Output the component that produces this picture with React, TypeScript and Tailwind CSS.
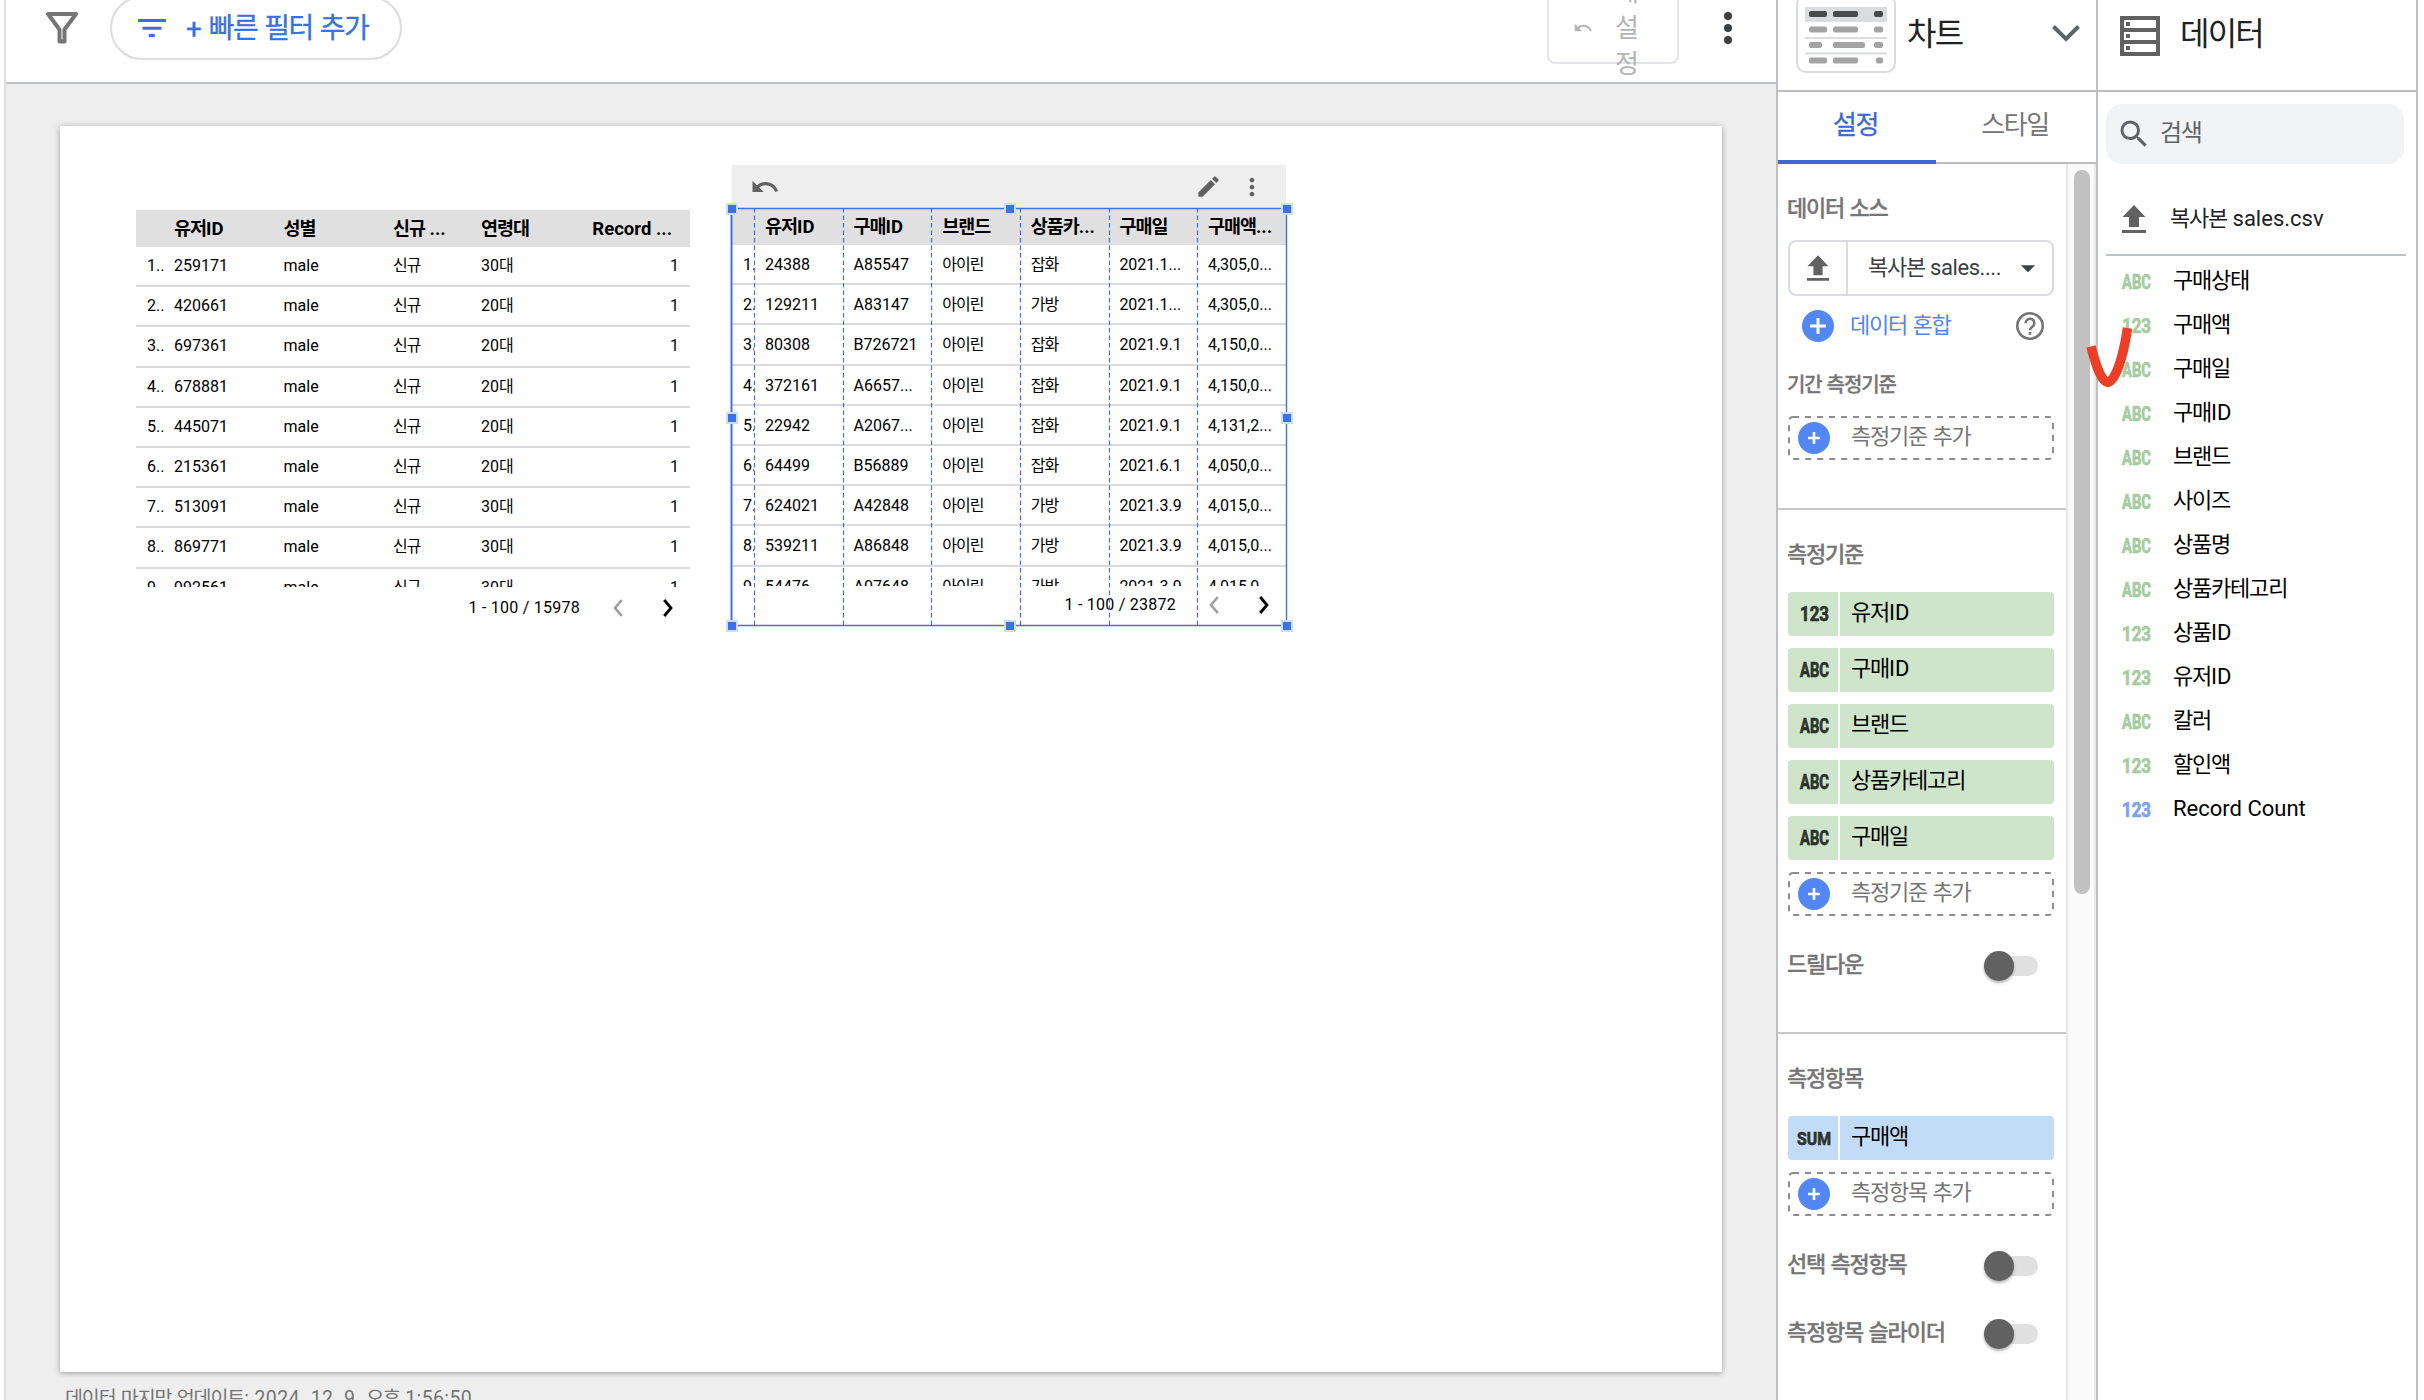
import type { ReactNode } from 'react'
import clsx from 'clsx'
import { MdArrowDropDown, MdCreate, MdMoreVert, MdSearch, MdUndo } from 'react-icons/md'

type FieldType = 'ABC' | '123' | 'SUM'

const USER_COLS = ['w-[26px]', 'w-[109.5px]', 'w-[109.5px]', 'w-[88px]', 'w-[111px]', 'w-[110px]']

const USER_ROWS = [
  ['259171', '30대'],
  ['420661', '20대'],
  ['697361', '20대'],
  ['678881', '20대'],
  ['445071', '20대'],
  ['215361', '20대'],
  ['513091', '30대'],
  ['869771', '30대'],
  ['992561', '30대'],
]

const SALES_HEAD = ['유저ID', '구매ID', '브랜드', '상품카...', '구매일', '구매액...']

const SALES_ROWS = [
  ['24388', 'A85547', '아이린', '잡화', '2021.1...', '4,305,0...'],
  ['129211', 'A83147', '아이린', '가방', '2021.1...', '4,305,0...'],
  ['80308', 'B726721', '아이린', '잡화', '2021.9.1', '4,150,0...'],
  ['372161', 'A6657...', '아이린', '잡화', '2021.9.1', '4,150,0...'],
  ['22942', 'A2067...', '아이린', '잡화', '2021.9.1', '4,131,2...'],
  ['64499', 'B56889', '아이린', '잡화', '2021.6.1', '4,050,0...'],
  ['624021', 'A42848', '아이린', '가방', '2021.3.9', '4,015,0...'],
  ['539211', 'A86848', '아이린', '가방', '2021.3.9', '4,015,0...'],
  ['54476', 'A07648', '아이린', '가방', '2021.3.9', '4,015,0...'],
]

const DIMENSIONS: [FieldType, string][] = [
  ['123', '유저ID'],
  ['ABC', '구매ID'],
  ['ABC', '브랜드'],
  ['ABC', '상품카테고리'],
  ['ABC', '구매일'],
]

const FIELDS: [FieldType, string][] = [
  ['ABC', '구매상태'],
  ['123', '구매액'],
  ['ABC', '구매일'],
  ['ABC', '구매ID'],
  ['ABC', '브랜드'],
  ['ABC', '사이즈'],
  ['ABC', '상품명'],
  ['ABC', '상품카테고리'],
  ['123', '상품ID'],
  ['123', '유저ID'],
  ['ABC', '칼러'],
  ['123', '할인액'],
  ['123', 'Record Count'],
]

// Hangul runs are set a little tighter than the Latin around them
function Ko({ children }: { children: string }) {
  return (
    <span className="whitespace-pre">
      {children.split(/([가-힣]+)/).map((part, i) =>
        i % 2 ? (
          <span key={i} className="tracking-[-0.055em]">
            {part}
          </span>
        ) : (
          part
        )
      )}
    </span>
  )
}

function TypeIcon({ type, className }: { type: FieldType; className?: string }) {
  const width = type === 'SUM' ? 34 : 29
  return (
    <svg
      width={width}
      height="16"
      viewBox={`0 0 ${width} 16`}
      className={clsx('overflow-visible', className)}
      fill="currentColor"
      stroke="currentColor"
      strokeWidth="0.7"
    >
      <text
        x="0"
        y="15"
        fontFamily="Roboto, sans-serif"
        fontWeight="700"
        fontSize={type === 'SUM' ? 19 : 19.5}
        textLength={width}
        lengthAdjust="spacingAndGlyphs"
      >
        {type}
      </text>
    </svg>
  )
}

function UploadIcon({ className }: { className?: string }) {
  return (
    <svg viewBox="0 0 24 28" className={className} fill="currentColor">
      <path d="M12 0 23.5 12H17v10H7V12H.5zM0 25h24v3H0z" />
    </svg>
  )
}

function PlusCircle({ small = false }: { small?: boolean }) {
  return (
    <svg viewBox="0 0 32 32" className="size-8 shrink-0">
      <circle cx="16" cy="16" r="16" fill="#5287f5" />
      <path
        d={small ? 'M16 10v12M10 16h12' : 'M16 8v16M8 16h16'}
        stroke="#fff"
        strokeWidth={small ? 2.6 : 3}
      />
    </svg>
  )
}

function Pager({ range }: { range: string }) {
  return (
    <div className="flex h-[42px] items-center justify-end text-[16px] text-black">
      <span className="tracking-[0.015em]">{range}</span>
      <svg viewBox="0 0 10 18" className="ml-[33px] h-[18px] w-2.5" fill="none" stroke="#9e9e9e" strokeWidth="2.6">
        <path d="M8.8 1 2 9l6.800 8" />
      </svg>
      <svg viewBox="0 0 10 18" className="mr-[17px] ml-10 h-[18px] w-2.5" fill="none" stroke="#000" strokeWidth="2.8">
        <path d="M1.200 1 8 9l-6.800 8" />
      </svg>
    </div>
  )
}

function UserTable() {
  return (
    <div className="w-[554px] text-[16px] text-black">
      <div className="flex h-[37px] items-center bg-[#e0e0e0] pt-0.5 text-[18.500px] font-bold">
        <span className={USER_COLS[0]} />
        {['유저ID', '성별', '신규 ...', '연령대'].map((h, i) => (
          <span key={h} className={clsx(USER_COLS[i + 1], 'pl-3')}>
            <Ko>{h}</Ko>
          </span>
        ))}
        <span className="w-[110px] pr-[18px] text-right">Record ...</span>
      </div>
      <div className="h-[340px] overflow-hidden">
        {USER_ROWS.map(([id, age], i) => (
          <div key={id} className="flex h-[40.2px] items-center border-b-2 border-[#dadada]">
            <span className="w-[26px] pl-[11px] whitespace-nowrap">{i + 1}..</span>
            <span className="w-[109.5px] pl-3">{id}</span>
            <span className="w-[109.5px] pl-3">male</span>
            <span className="w-[88px] pl-3">
              <Ko>신규</Ko>
            </span>
            <span className="w-[111px] pl-3">
              <Ko>{age}</Ko>
            </span>
            <span className="w-[110px] pr-[11px] text-right">1</span>
          </div>
        ))}
      </div>
      <Pager range="1 - 100 / 15978" />
    </div>
  )
}

function Handle({ className }: { className: string }) {
  return <span className={clsx('absolute size-3 border-2 border-[#cfdcf8] bg-[#3b74e0]', className)} />
}

function SalesTable() {
  return (
    <div className="w-[554px] text-[16px] text-black">
      <div className="flex h-[43px] items-center bg-[#eeeeee] text-[#616161]">
        <MdUndo className="ml-[18px] size-[30px]" />
        <MdCreate className="ml-auto size-[27px]" />
        <MdMoreVert className="mr-[20px] ml-[16px] size-[28px]" />
      </div>
      <div className="relative h-[418px]">
        <div className="flex h-[37px] items-center bg-[#e0e0e0] pt-0.5 text-[18.500px] font-bold">
          <span className="w-[22px]" />
          {SALES_HEAD.map((h) => (
            <span key={h} className="w-[88.600px] pl-[11px]">
              <Ko>{h}</Ko>
            </span>
          ))}
        </div>
        <div className="h-[341px] overflow-hidden">
          {SALES_ROWS.map((row, i) => (
            <div key={row[0]} className="flex h-[40.2px] items-center border-b-2 border-[#dadada] pt-0.5">
              <span className="w-[22px] overflow-hidden pl-[11px] whitespace-nowrap">{i + 1}..</span>
              {row.map((cell, j) => (
                <span key={j} className="w-[88.600px] pl-[11px]">
                  <Ko>{cell}</Ko>
                </span>
              ))}
            </div>
          ))}
        </div>
        <div className="-mt-0.5">
          <Pager range="1 - 100 / 23872" />
        </div>

        {/* selection frame and column guides */}
        <svg className="absolute inset-0 h-full w-full overflow-visible" fill="none" stroke="#3b74e0">
          {[22.5, 111.5, 199.5, 288.5, 377.5, 465.5].map((x) => (
            <path key={x} d={`M${x} 0V418`} strokeWidth="1.2" strokeDasharray="4.5 3" />
          ))}
          <path d="M0 .5H554.500V417.500H0" strokeWidth="1.4" />
          <path d="M-.5 0V418" strokeWidth="2" />
        </svg>
        <Handle className="-top-[5px] -left-[6px]" />
        <Handle className="-top-[5px] left-[272px]" />
        <Handle className="-top-[5px] left-[549px]" />
        <Handle className="top-[204px] -left-[6px]" />
        <Handle className="top-[204px] left-[549px]" />
        <Handle className="top-[412px] -left-[6px]" />
        <Handle className="top-[412px] left-[272px]" />
        <Handle className="top-[412px] left-[549px]" />
      </div>
    </div>
  )
}

function Toolbar() {
  return (
    <div className="flex h-[84px] shrink-0 items-start border-b-2 border-[#bdc1c6] bg-white">
      <svg viewBox="0 0 32 32" className="mt-3 ml-10 size-8" fill="none" stroke="#757575">
        <path d="M2 2h28L18.500 17.500V29.500h-5V17.500z" strokeWidth="4" strokeLinejoin="round" />
      </svg>
      <div className="-mt-1 ml-8 flex h-16 w-[292px] items-center rounded-full border-2 border-[#dadce0] pl-[26px] text-[#3871e0]">
        <svg viewBox="0 0 28 18" className="h-[18px] w-7" fill="currentColor">
          <path d="M0 0h28v3H0zM4.500 7.700h19v3h-19zM10.800 15h6v3h-6z" />
        </svg>
        <span className="mt-0.5 ml-5 text-[28px] leading-none [-webkit-text-stroke:0.3px]">
          <Ko>+ 빠른 필터 추가</Ko>
        </span>
      </div>
      <div className="-mt-8 ml-auto flex h-24 w-[132px] justify-between rounded-lg border-2 border-[#e4e5e8] pr-[38px] pl-6 text-[#b4b4b4]">
        <MdUndo className="mt-[48px] size-5" />
        <div className="mt-1 w-6 text-[26px] leading-9 break-all">재설정</div>
      </div>
      <svg viewBox="0 0 8 32" className="mt-3 mr-11 ml-[45px] h-8 w-2" fill="#3c4043">
        <circle cx="4" cy="4" r="4" />
        <circle cx="4" cy="16" r="4" />
        <circle cx="4" cy="28" r="4" />
      </svg>
    </div>
  )
}

function ChartThumb() {
  return (
    <div className="-mt-1.5 h-[79px] w-[100px] rounded-[10px] border-2 border-[#dadce0] pt-[11px] pl-[7px]">
      <svg viewBox="0 0 82 60" className="h-[60px] w-[82px]">
        <path d="M0 0h82v15H0z" fill="#dadce0" />
        <path d="M0 31h82M0 46.500h82" stroke="#dadce0" strokeWidth="2" />
        <g fill="#4a4a4a">
          <rect x="4" y="4" width="18" height="6" rx="2" />
          <rect x="28" y="4" width="25" height="6" rx="2" />
          <rect x="69" y="4" width="9" height="6" rx="2" />
        </g>
        <g fill="#a3a3a3">
          <rect x="4" y="19.500" width="18" height="6" rx="2" />
          <rect x="28" y="19.500" width="25" height="6" rx="2" />
          <rect x="69" y="19.500" width="9" height="6" rx="2" />
          <rect x="4" y="35" width="13" height="6" rx="2" />
          <rect x="28" y="35" width="32" height="6" rx="2" />
          <rect x="69" y="35" width="9" height="6" rx="2" />
          <rect x="4" y="50.500" width="18" height="6" rx="2" />
          <rect x="28" y="50.500" width="25" height="6" rx="2" />
          <rect x="71" y="50.500" width="7" height="6" rx="2" />
        </g>
      </svg>
    </div>
  )
}

function Chip({ type, label, blue = false }: { type: FieldType; label: string; blue?: boolean }) {
  const bg = blue ? 'bg-[#c2dcf7]' : 'bg-[#cee5cb]'
  return (
    <div className="flex h-11 gap-0.5">
      <div className={clsx('flex w-[50px] items-center justify-center rounded-l pl-0.5 text-[#2c332c]', bg)}>
        <TypeIcon type={type} />
      </div>
      <div className={clsx('flex flex-1 items-center rounded-r pb-1 pl-[11px] text-[22px] text-black', bg)}>
        <Ko>{label}</Ko>
      </div>
    </div>
  )
}

function AddField({ label }: { label: string }) {
  return (
    <div className="relative flex h-11 items-center pl-2.5">
      <svg className="absolute inset-0 h-full w-full">
        <rect x="1" y="1" width="264" height="42" rx="4" fill="none" stroke="#8e8e8e" strokeWidth="2" strokeDasharray="6 6" />
      </svg>
      <PlusCircle small />
      <span className="ml-[21px] pb-1 text-[22px] text-[#757575]">
        <Ko>{label}</Ko>
      </span>
    </div>
  )
}

function SectionLabel({ children }: { children: string }) {
  return (
    <h3 className="-ml-px h-8 text-[22px] leading-[33px] font-medium text-[#757575] [-webkit-text-stroke:0.3px]">
      <Ko>{children}</Ko>
    </h3>
  )
}

function ToggleRow({ label, className }: { label: string; className?: string }) {
  return (
    <div className={clsx('flex h-8 items-center justify-between pr-4', className)}>
      <SectionLabel>{label}</SectionLabel>
      <div className="mt-[3px] flex h-5 w-[50px] items-center rounded-full bg-[#e0e0e0]">
        <span className="-ml-1 size-[30px] rounded-full bg-[#616161] shadow-[0_2px_3px_rgba(0,0,0,0.3)]" />
      </div>
    </div>
  )
}

function Section({ children, className }: { children: ReactNode; className?: string }) {
  return <section className={clsx('border-b-2 border-[#c8c8c8] pr-3 pl-2.5', className)}>{children}</section>
}

function ChartPanel() {
  return (
    <div className="flex w-[322px] shrink-0 flex-col border-x-2 border-[#bdc1c6] bg-white">
      <div className="flex h-[92px] shrink-0 items-start border-b-2 border-[#bdbdbd] pl-[18px]">
        <ChartThumb />
        <span className="mt-[10px] ml-[11px] text-[32px] leading-[48px] text-[#202124]">
          <Ko>차트</Ko>
        </span>
        <svg viewBox="0 0 28 17" className="mt-[25px] mr-4 ml-auto h-[17px] w-7" fill="none" stroke="#5f6368" strokeWidth="4">
          <path d="M1.500 1.500 14 14 26.500 1.500" />
        </svg>
      </div>
      <div className="flex h-[72px] shrink-0 text-[26px]">
        <div className="flex w-[158px] items-center justify-center border-b-4 border-[#3f67d3] pr-[3px] pb-px text-[#3f67d3] [-webkit-text-stroke:0.3px]">
          <Ko>설정</Ko>
        </div>
        <div className="flex flex-1 items-center justify-center border-b-2 border-[#bdbdbd] pr-0.5 pb-[3px] text-[#757575]">
          <Ko>스타일</Ko>
        </div>
      </div>
      <div className="flex min-h-0 flex-1">
        <div className="w-72 overflow-hidden">
          <Section className="h-[346px] pt-7">
            <SectionLabel>데이터 소스</SectionLabel>
            <div className="mt-4 flex h-14 items-center rounded-lg border-2 border-[#dadce0]">
              <div className="flex h-full w-[58px] items-center justify-center border-r-2 border-[#dadce0]">
                <UploadIcon className="h-[26px] w-[22px] text-[#616161]" />
              </div>
              <span className="ml-5 pb-0.5 text-[22px] tracking-[-0.02em] text-[#3c4043]">
                <Ko>복사본 sales....</Ko>
              </span>
              <MdArrowDropDown className="mr-[7px] ml-auto size-[34px] shrink-0 text-[#3c4043]" />
            </div>
            <div className="mt-3 flex h-9 items-center pr-2.5 pl-3.5">
              <PlusCircle />
              <span className="ml-4 pb-0.5 text-[22px] text-[#4f85f5]">
                <Ko>데이터 혼합</Ko>
              </span>
              <svg viewBox="0 0 28 28" className="ml-auto size-7" fill="none" stroke="#757575" strokeWidth="2.600">
                <circle cx="14" cy="14" r="12.700" />
                <path d="M9.700 11.200a4.300 4.300 0 1 1 6.900 3.300c-1.600 1.200-2.600 1.800-2.600 3.700" />
                <path d="M14 20v2.800" />
              </svg>
            </div>
            <h3 className="mt-[25px] -ml-px h-8 text-[20px] leading-[33px] font-medium text-[#757575] [-webkit-text-stroke:0.3px]">
              <Ko>기간 측정기준</Ko>
            </h3>
            <div className="mt-[15px]">
              <AddField label="측정기준 추가" />
            </div>
          </Section>
          <Section className="h-[524px] pt-7">
            <SectionLabel>측정기준</SectionLabel>
            <div className="mt-[22px] flex flex-col gap-3">
              {DIMENSIONS.map(([type, label]) => (
                <Chip key={label} type={type} label={label} />
              ))}
              <AddField label="측정기준 추가" />
            </div>
            <ToggleRow label="드릴다운" className="mt-8" />
          </Section>
          <Section className="pt-7">
            <SectionLabel>측정항목</SectionLabel>
            <div className="mt-[22px] flex flex-col gap-3">
              <Chip type="SUM" label="구매액" blue />
              <AddField label="측정항목 추가" />
            </div>
            <ToggleRow label="선택 측정항목" className="mt-8" />
            <ToggleRow label="측정항목 슬라이더" className="mt-9 mb-16" />
          </Section>
        </div>
        <div className="flex-1 border-x-2 border-[#e8e8e8] bg-[#fafafa] pt-1.5 pl-1.5">
          <div className="h-[724px] w-4 rounded-full bg-[#c1c1c1]" />
        </div>
      </div>
    </div>
  )
}

function DataPanel() {
  return (
    <div className="flex w-80 shrink-0 flex-col border-r-2 border-[#bdc1c6] bg-white">
      <div className="flex h-[92px] shrink-0 items-start border-b-2 border-[#bdbdbd] pl-[22px]">
        <svg viewBox="0 0 40 40" className="mt-4 size-10" fill="none" stroke="#616161">
          <path d="M2 2h36v36H2zM2 14h36M2 26h36" strokeWidth="4" />
          <path d="M6 8h4M6 20h4M6 32h4" strokeWidth="4" />
        </svg>
        <span className="mt-[10px] ml-5 text-[32px] leading-[48px] text-[#202124]">
          <Ko>데이터</Ko>
        </span>
      </div>
      <div className="mt-3 ml-2 flex h-[60px] w-[298px] items-center rounded-2xl bg-[#f1f3f4] text-[#5f6368]">
        <MdSearch className="ml-[10px] size-9" />
        <span className="ml-2 pb-[3px] text-[24px]">
          <Ko>검색</Ko>
        </span>
      </div>
      <div className="mt-8 ml-2 flex h-[60px] w-[300px] items-start border-b-2 border-[#bdc1c6] pl-4">
        <UploadIcon className="mt-[9px] h-7 w-6 text-[#616161]" />
        <span className="mt-[5px] ml-6 text-[22px] leading-9 text-[#202124]">
          <Ko>복사본 sales.csv</Ko>
        </span>
      </div>
      <ul className="mt-0.5 pl-6">
        {FIELDS.map(([type, label]) => (
          <li key={label} className="flex h-11 items-center">
            <TypeIcon
              type={type}
              className={clsx('mt-1', label === 'Record Count' ? 'text-[#7ba1f1]' : 'text-[#a5cc9f]')}
            />
            <span className="ml-[22px] text-[22px] text-black">
              <Ko>{label}</Ko>
            </span>
          </li>
        ))}
      </ul>
    </div>
  )
}

export default function App() {
  return (
    <div className="relative flex h-[1400px] w-[2424px] overflow-hidden bg-white pl-1 font-['Roboto','Noto_Sans_CJK_KR',sans-serif]">
      <main className="flex w-[1772px] shrink-0 flex-col overflow-hidden border-l-2 border-[#dfdfdf]">
        <Toolbar />
        <div className="flex-1 bg-[#eeeeee] pt-[42px] pl-[54px]">
          <div className="flex h-[1246px] w-[1662px] items-start bg-white pl-[76px] shadow-[0_1px_6px_rgba(0,0,0,0.35)]">
            <div className="mt-[84px]">
              <UserTable />
            </div>
            <div className="mt-[39px] ml-[42px]">
              <SalesTable />
            </div>
          </div>
          <p className="mt-[15px] ml-[5px] text-[19.500px] leading-6 tracking-[0.02em] text-[#757575]">
            <Ko>데이터 마지막 업데이트: 2024. 12. 9. 오후 1:56:50</Ko>
          </p>
        </div>
      </main>
      <ChartPanel />
      <DataPanel />

      {/* hand-drawn check over the scrollbar */}
      <svg className="absolute top-[320px] left-[2080px] h-20 w-16" fill="none" stroke="#ec3f27" strokeWidth="9.500">
        <path d="M11 26.500C17 50 22.500 62 27.500 62.300C35 62 43 39 47.500 8" />
      </svg>
    </div>
  )
}
